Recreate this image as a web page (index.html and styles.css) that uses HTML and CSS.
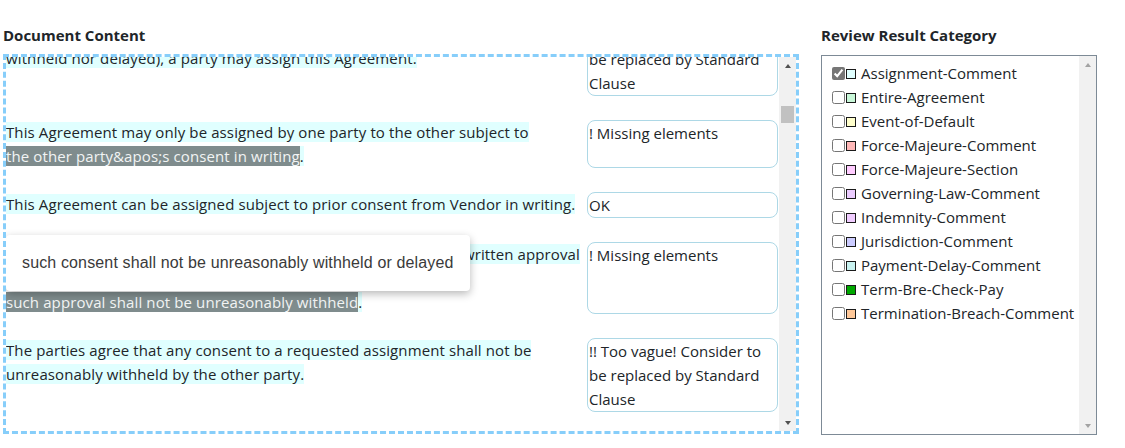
FILE: index.html
```html
<!DOCTYPE html>
<html lang="en">
<head>
<meta charset="utf-8">
<title>Document Review</title>
<link rel="stylesheet" href="styles.css">
</head>
<body>
<div class="page">
  <section class="doc">
    <h2 class="title">Document Content</h2>
    <div class="doc-box">
      <div class="doc-view">
        <div class="doc-rows">
          <div class="row">
            <div class="row-text"><span class="hl">With the other party's prior written consent (which shall not be unreasonably withheld nor delayed), a party may assign this Agreement.</span></div>
            <textarea class="note" rows="3">!! Too vague! Consider to be replaced by Standard Clause</textarea>
          </div>
          <div class="row">
            <div class="row-text"><span class="hl">This Agreement may only be assigned by one party to the other subject to </span><span class="sel">the other party&amp;apos;s consent in writing</span><span class="hl">.</span></div>
            <textarea class="note" rows="1">! Missing elements</textarea>
          </div>
          <div class="row">
            <div class="row-text"><span class="hl">This Agreement can be assigned subject to prior consent from Vendor in writing.</span></div>
            <textarea class="note" rows="1">OK</textarea>
          </div>
          <div class="row">
            <div class="row-text"><span class="hl">Each party may assign this Agreement to a third party with prior written approval from the other party, provided, however, that </span><span class="sel">such approval shall not be unreasonably withheld</span><span class="hl">.</span>
              <div class="tooltip">such consent shall not be unreasonably withheld or delayed</div>
            </div>
            <textarea class="note" rows="1">! Missing elements</textarea>
          </div>
          <div class="row">
            <div class="row-text"><span class="hl">The parties agree that any consent to a requested assignment shall not be unreasonably withheld by the other party.</span></div>
            <textarea class="note" rows="3">!! Too vague! Consider to be replaced by Standard Clause</textarea>
          </div>
        </div>
      </div>
      <div class="sbar">
        <span class="sb-btn up"></span>
        <span class="sb-track"><span class="sb-thumb"></span></span>
        <span class="sb-btn down"></span>
      </div>
    </div>
  </section>
  <aside class="review">
    <h2 class="title">Review Result Category</h2>
    <div class="cat-box">
      <ul class="cat-list">
        <li class="cat-item"><input type="checkbox" checked><span class="swatch c-assign"></span>Assignment-Comment</li>
        <li class="cat-item"><input type="checkbox"><span class="swatch c-entire"></span>Entire-Agreement</li>
        <li class="cat-item"><input type="checkbox"><span class="swatch c-event"></span>Event-of-Default</li>
        <li class="cat-item"><input type="checkbox"><span class="swatch c-fmc"></span>Force-Majeure-Comment</li>
        <li class="cat-item"><input type="checkbox"><span class="swatch c-fms"></span>Force-Majeure-Section</li>
        <li class="cat-item"><input type="checkbox"><span class="swatch c-gov"></span>Governing-Law-Comment</li>
        <li class="cat-item"><input type="checkbox"><span class="swatch c-ind"></span>Indemnity-Comment</li>
        <li class="cat-item"><input type="checkbox"><span class="swatch c-jur"></span>Jurisdiction-Comment</li>
        <li class="cat-item"><input type="checkbox"><span class="swatch c-pay"></span>Payment-Delay-Comment</li>
        <li class="cat-item"><input type="checkbox"><span class="swatch c-term"></span>Term-Bre-Check-Pay</li>
        <li class="cat-item"><input type="checkbox"><span class="swatch c-tbc"></span>Termination-Breach-Comment</li>
      </ul>
      <div class="sbar disabled">
        <span class="sb-btn up"></span>
        <span class="sb-track"></span>
        <span class="sb-btn down"></span>
      </div>
    </div>
  </aside>
</div>
</body>
</html>
```
FILE: styles.css
```css
html, body {
  margin: 0;
  padding: 0;
  background: #fff;
}
body {
  font-family: "Open Sans", "Noto Sans", sans-serif;
  color: #212529;
  font-size: 15px;
  line-height: 24px;
}
.page {
  display: flex;
  gap: 22px;
  padding: 23px 0 0 3px;
}
.doc {
  width: 796px;
}
.review {
  width: 276px;
}
.title {
  margin: 0 0 7px;
  font-size: 15px;
  font-weight: 700;
  line-height: 24px;
  color: #212529;
}
.review .title {
  margin-bottom: 8px;
}
.doc-box {
  box-sizing: border-box;
  height: 380px;
  border: 3px dashed #87cefa;
  display: flex;
}
.doc-view {
  flex: 1;
  overflow: hidden;
}
.doc-rows {
  display: flex;
  flex-direction: column;
  gap: 24px;
  margin-top: -35px;
}
.row {
  display: flex;
  align-items: stretch;
  gap: 4px;
}
.row-text {
  flex: 1;
  position: relative;
  letter-spacing: 0.11px;
}
.hl {
  background: #e0ffff;
}
.sel {
  background: #7f8c8d;
  color: #f2f4f4;
  white-space: nowrap;
}
.note {
  box-sizing: border-box;
  width: 191px;
  margin: 0 1px 0 0;
  padding: 0 1px;
  border: 1px solid #add8e6;
  border-radius: 8px;
  font: inherit;
  font-size: 15px;
  line-height: 24px;
  color: #212529;
  resize: none;
  overflow: hidden;
  background: #fff;
}
.tooltip {
  position: absolute;
  top: -7px;
  left: 0;
  padding: 16px;
  background: #fff;
  border-radius: 4px;
  box-shadow: 0 3px 9px rgba(0, 0, 0, 0.28);
  font-family: "Liberation Sans", Arial, sans-serif;
  font-size: 16px;
  line-height: 24px;
  letter-spacing: 0.14px;
  color: #3a3a3a;
  white-space: nowrap;
}
.sbar {
  width: 17px;
  flex: none;
  background: #f1f1f1;
  display: flex;
  flex-direction: column;
}
.sb-btn {
  height: 17px;
  display: flex;
  align-items: center;
  justify-content: center;
}
.sb-btn::before {
  content: "";
  width: 0;
  height: 0;
  border-left: 3.5px solid transparent;
  border-right: 3.5px solid transparent;
}
.sb-btn.up::before {
  border-bottom: 4px solid #505050;
}
.sb-btn.down::before {
  border-top: 4px solid #505050;
}
.sbar.disabled .sb-btn.up::before {
  border-bottom-color: #a3a3a3;
}
.sbar.disabled .sb-btn.down::before {
  border-top-color: #a3a3a3;
}
.sb-track {
  flex: 1;
}
.sb-thumb {
  display: block;
  height: 17px;
  margin: 32px 2px 0;
  background: #c1c1c1;
}
.cat-box {
  box-sizing: border-box;
  height: 380px;
  border: 1px solid #7d8a96;
  display: flex;
}
.cat-list {
  flex: 1;
  list-style: none;
  margin: 0;
  padding: 5px 0 0 10px;
}
.cat-item {
  display: flex;
  align-items: center;
  height: 24px;
  font-size: 15px;
  white-space: nowrap;
}
.cat-item input {
  width: 13px;
  height: 13px;
  margin: 1px 0 0;
  accent-color: #767676;
}
.swatch {
  box-sizing: border-box;
  width: 10px;
  height: 10px;
  border: 1px solid #1a1a1a;
  margin: 1px 5px 0 1px;
}
.c-assign { background: #e0ffff; }
.c-entire { background: #c8f7d8; }
.c-event { background: #ffffcc; }
.c-fmc { background: #ffb8b8; }
.c-fms { background: #ffccff; }
.c-gov { background: #ebccff; }
.c-ind { background: #f0ccff; }
.c-jur { background: #ccccff; }
.c-pay { background: #c8f2f0; }
.c-term { background: #00a800; }
.c-tbc { background: #ffc899; }
```
